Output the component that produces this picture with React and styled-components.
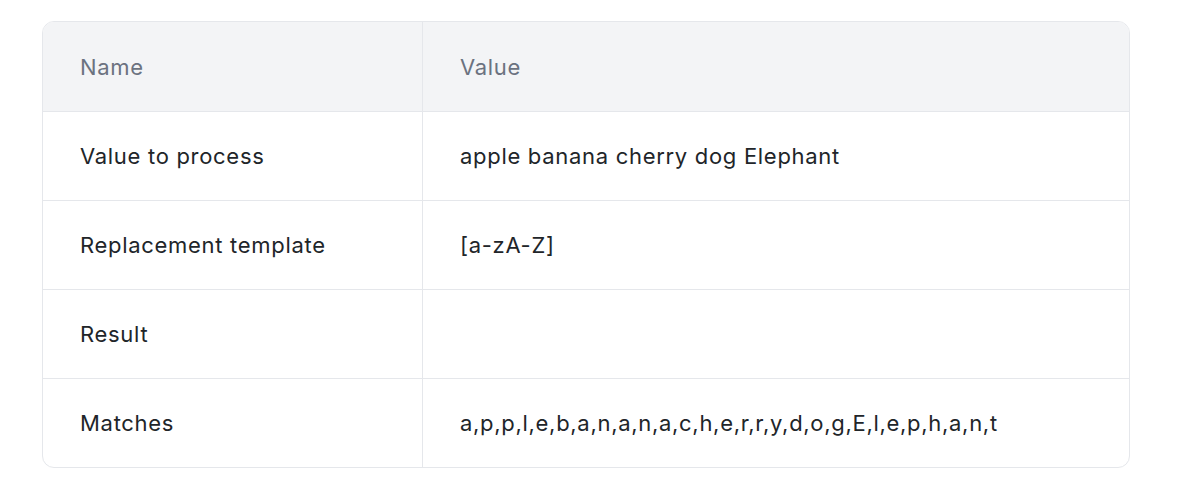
import styled, { createGlobalStyle } from "styled-components";

const GlobalStyle = createGlobalStyle`
  body {
    margin: 0;
    background: #ffffff;
    font-family: Inter, "Noto Sans", sans-serif;
  }
`;

const Page = styled.div`
  padding: 21px 70px 0 42px;
`;

const Table = styled.table`
  width: 1088px;
  border-collapse: separate;
  border-spacing: 0;
  border: 1px solid #e5e7eb;
  border-radius: 12px;
  overflow: hidden;
  font-size: 22px;
  letter-spacing: 0.7px;
`;

const HeadCell = styled.th`
  background: #f3f4f6;
  color: #6b7280;
  font-weight: 400;
  text-align: left;
  height: 89px;
  padding: 0 38px 0 37px;
  box-sizing: border-box;
  border-left: ${({ $first }) => ($first ? "none" : "1px solid #e5e7eb")};
  width: ${({ $first }) => ($first ? "379px" : "auto")};
`;

const Cell = styled.td`
  color: #212529;
  height: 89px;
  padding: 0 38px 0 37px;
  box-sizing: border-box;
  border-top: 1px solid #e5e7eb;
  border-left: ${({ $first }) => ($first ? "none" : "1px solid #e5e7eb")};
`;

const rows = [
  ["Value to process", "apple banana cherry dog Elephant"],
  ["Replacement template", "[a-zA-Z]"],
  ["Result", ""],
  ["Matches", "a,p,p,l,e,b,a,n,a,n,a,c,h,e,r,r,y,d,o,g,E,l,e,p,h,a,n,t"],
];

const App = () => {
  return (
    <>
      <GlobalStyle />
      <Page>
        <Table>
          <thead>
            <tr>
              <HeadCell $first>Name</HeadCell>
              <HeadCell>Value</HeadCell>
            </tr>
          </thead>
          <tbody>
            {rows.map(([name, value]) => (
              <tr key={name}>
                <Cell $first>{name}</Cell>
                <Cell>{value}</Cell>
              </tr>
            ))}
          </tbody>
        </Table>
      </Page>
    </>
  );
};

export default App;
